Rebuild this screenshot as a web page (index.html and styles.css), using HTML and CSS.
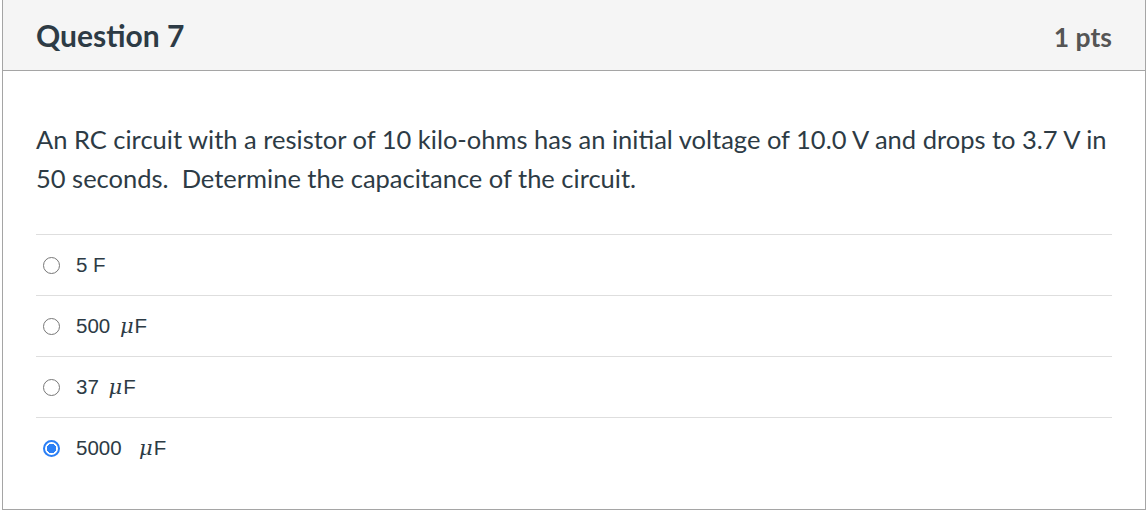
FILE: index.html
```html
<!DOCTYPE html>
<html>
<head>
<meta charset="utf-8">
<link rel="stylesheet" href="styles.css">
</head>
<body>
<div class="question">
  <div class="header">
    <h2 class="title">Question 7</h2>
    <div class="pts">1 pts</div>
  </div>
  <div class="content">
    <p class="text">An RC circuit with a resistor of 10 kilo-ohms has an initial voltage of 10.0 V and drops to 3.7 V in 50 seconds.&nbsp; Determine the capacitance of the circuit.</p>
    <div class="answers">
      <div class="answer"><span class="radio"></span><span class="label">5 F</span></div>
      <div class="answer"><span class="radio"></span><span class="label">500 <i class="mu">μ</i>F</span></div>
      <div class="answer"><span class="radio"></span><span class="label">37 <i class="mu">μ</i>F</span></div>
      <div class="answer"><span class="radio checked"></span><span class="label">5000 &nbsp;<i class="mu wide">μ</i>F</span></div>
    </div>
  </div>
</div>
</body>
</html>
```
FILE: styles.css
```css
body {
  margin: 0;
  background: #fff;
  font-family: Lato, "Liberation Sans", sans-serif;
  color: #2d3b45;
}
.question {
  margin-left: 2px;
  width: 1142px;
  height: 509px;
  border: 1px solid #a5a5a5;
  border-top: none;
  display: flex;
  flex-direction: column;
}
.header {
  height: 70px;
  background: #f5f5f5;
  border-bottom: 1px solid #a5a5a5;
  display: flex;
  align-items: center;
  justify-content: space-between;
  padding: 0 33px 0 33px;
}
.title {
  margin: 0;
  font-size: 30px;
  font-weight: 700;
  color: #2d3b45;
}
.pts {
  font-size: 26.5px;
  font-weight: 700;
  color: #555;
  padding-top: 3px;
}
.content {
  padding: 0 33px;
}
.text {
  margin: 49px 0 0 0;
  font-size: 25.5px;
  line-height: 39px;
}
.answers {
  margin-top: 36px;
}
.answer {
  height: 60px;
  border-top: 1px solid #dedede;
  display: flex;
  align-items: center;
  padding-left: 7px;
}
.radio {
  width: 17px;
  height: 17px;
  border: 1px solid #777;
  border-radius: 50%;
  box-sizing: border-box;
  margin-right: 16px;
  flex: none;
}
.radio.checked {
  border: 2px solid #2b7ff5;
  background: radial-gradient(circle, #2b7ff5 0 4.5px, #fff 5px);
}
.label {
  font-family: "Liberation Sans", Arial, sans-serif;
  font-size: 20.5px;
  color: #2d3b45;
}
.mu {
  font-family: "DejaVu Serif", "Liberation Serif", serif;
  font-style: italic;
  font-size: 21px;
  padding-left: 4px;
  padding-right: 1px;
}
.mu.wide {
  padding-left: 6px;
}
```
